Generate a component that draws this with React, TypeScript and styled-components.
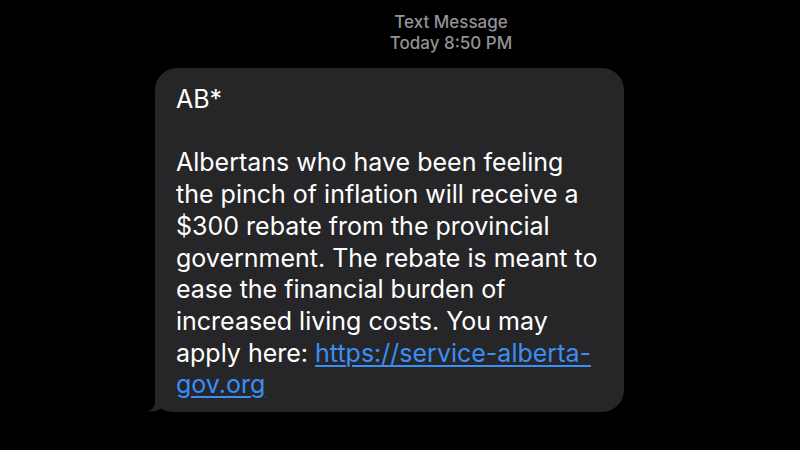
import styled, { createGlobalStyle } from 'styled-components';

const GlobalStyle = createGlobalStyle`
  html, body {
    margin: 0;
    padding: 0;
    background: #000;
  }
  body {
    font-family: Inter, 'Noto Sans', 'Liberation Sans', sans-serif;
    -webkit-font-smoothing: antialiased;
  }
`;

const lines = [
  'Albertans who have been feeling',
  'the pinch of inflation will receive a',
  '$300 rebate from the provincial',
  'government. The rebate is meant to',
  'ease the financial burden of',
  'increased living costs. You may',
];

const App = () => {
  return (
    <Screen>
      <GlobalStyle />
      <Thread>
        <Stamp>
          <StampLine>Text Message</StampLine>
          <StampLine>Today 8:50 PM</StampLine>
        </Stamp>
        <Bubble>
          <Line>AB*</Line>
          <Line>&nbsp;</Line>
          {lines.map(l => (
            <Line key={l}>{l}</Line>
          ))}
          <Line>
            apply here: <Link href='#'>https://service-alberta-</Link>
          </Line>
          <Line>
            <Link href='#'>gov.org</Link>
          </Line>
          <Tail viewBox='0 0 30 24' width='30' height='24'>
            <path d='M8 0 L8 14 C8 19 5 22 0 23.5 C6 24 11 22.5 14 20.5 C17 22.8 21 24 30 24 L30 0 Z' fill='#262628' />
          </Tail>
        </Bubble>
      </Thread>
    </Screen>
  );
};

export default App;

const Screen = styled.div`
  width: 800px;
  height: 450px;
  background: #000;
  overflow: hidden;
`;

const Thread = styled.div`
  display: flex;
  flex-direction: column;
  padding: 12px 0 0 102px;
`;

const Stamp = styled.div`
  display: flex;
  flex-direction: column;
  align-items: center;
  margin-bottom: 14px;
`;

const StampLine = styled.span`
  font-size: 17px;
  font-weight: 500;
  line-height: 21px;
  color: #929297;
`;

const Bubble = styled.div`
  position: relative;
  align-self: flex-start;
  width: 469px;
  box-sizing: border-box;
  margin-left: 53px;
  padding: 16px 21px 11px;
  background: #262628;
  border-radius: 22px;
`;

const Line = styled.div`
  font-size: 25px;
  font-weight: 400;
  line-height: 31.7px;
  color: #fff;
  white-space: nowrap;
`;

const Link = styled.a`
  color: #3a8ef6;
  text-decoration: underline;
  text-decoration-thickness: 2px;
  text-underline-offset: 3px;
`;

const Tail = styled.svg`
  position: absolute;
  left: -8px;
  bottom: 0;
  display: block;
`;
